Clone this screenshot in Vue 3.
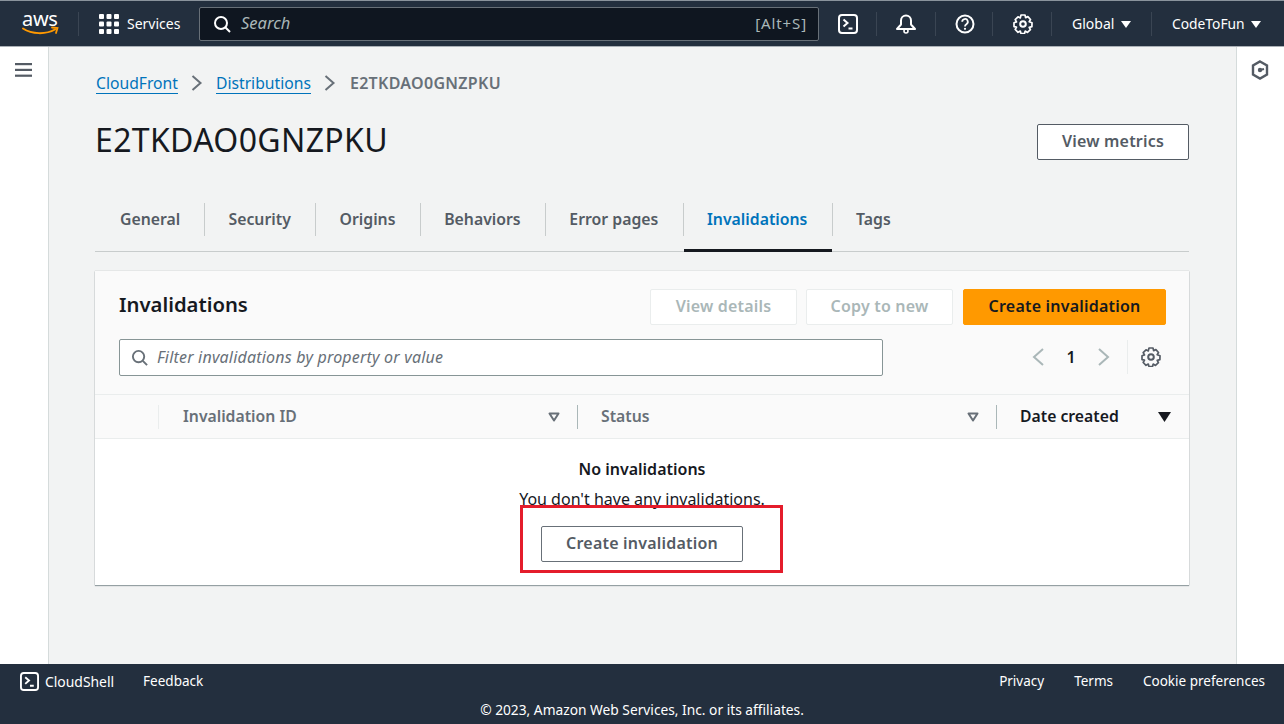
<script setup>
const tabs = ['General', 'Security', 'Origins', 'Behaviors', 'Error pages', 'Invalidations', 'Tags']
</script>

<template>
  <div class="page">
    <header class="top">
      <svg class="aws" viewBox="0 0 37 26" width="37" height="26">
        <text x="0" y="15" class="aws-t">aws</text>
        <path d="M1 17.500c9 6 23 6 32 1" fill="none" stroke="#f90" stroke-width="2" stroke-linecap="round"/>
        <path d="M30 16.500l5.500 0.500-1.500 5" fill="none" stroke="#f90" stroke-width="1.800" stroke-linecap="round"/>
      </svg>
      <span class="divider d1"></span>
      <svg class="grid-ic" width="20" height="20" viewBox="0 0 20 20" fill="#fff">
        <rect x="0" y="0" width="5" height="5" rx="1"/><rect x="7.500" y="0" width="5" height="5" rx="1"/><rect x="15" y="0" width="5" height="5" rx="1"/>
        <rect x="0" y="7.500" width="5" height="5" rx="1"/><rect x="7.500" y="7.500" width="5" height="5" rx="1"/><rect x="15" y="7.500" width="5" height="5" rx="1"/>
        <rect x="0" y="15" width="5" height="5" rx="1"/><rect x="7.500" y="15" width="5" height="5" rx="1"/><rect x="15" y="15" width="5" height="5" rx="1"/>
      </svg>
      <span class="services">Services</span>
      <div class="search">
        <svg width="18" height="18" viewBox="0 0 18 18" fill="none" stroke="#fff" stroke-width="2"><circle cx="8" cy="8" r="6"/><path d="M12.500 12.500L17 17"/></svg>
        <span class="search-ph">Search</span>
        <span class="search-key">[Alt+S]</span>
      </div>
      <div class="ic-cell c1">
        <svg width="20" height="20" viewBox="0 0 20 20" fill="none" stroke="#fff" stroke-width="2"><rect x="1" y="1" width="18" height="18" rx="3"/><path d="M5.500 5.500L9.500 9l-4 3.500M10.500 14.500h4"/></svg>
      </div>
      <div class="ic-cell c2">
        <svg width="20" height="20" viewBox="0 0 20 20" fill="none" stroke="#fff" stroke-width="2" stroke-linejoin="round"><path d="M1 15l4-4.500V6.500a5 5 0 0 1 10 0v4l4 4.500z"/><circle cx="10" cy="17" r="2" stroke-width="1.600"/></svg>
      </div>
      <div class="ic-cell c3">
        <svg width="20" height="20" viewBox="0 0 20 20" fill="none" stroke="#fff" stroke-width="2"><circle cx="10" cy="10" r="8.500"/><path d="M7.200 7.800a2.800 2.800 0 1 1 4.200 2.400c-1 .6-1.400 1-1.400 2.200" stroke-width="1.800"/><circle cx="10" cy="14.800" r="1.100" fill="#fff" stroke="none"/></svg>
      </div>
      <div class="ic-cell c4">
        <svg width="20" height="20" viewBox="0 0 20 20" fill="none" stroke="#fff" stroke-width="2" stroke-linejoin="round"><path d="M8 1h4l.6 2.600 2.300-1 2.600 2.900-1.300 2.200 2.800 1-.1 4-2.700.6 1.200 2.400-2.900 2.700-2.300-1.300-.7 2.500H8l-.7-2.600-2.300 1.300-2.800-2.800 1.300-2.300-2.500-.6V8.700l2.500-.8-1.300-2.300L5 2.800l2.300 1.100z" stroke-width="1.700"/><circle cx="10" cy="10" r="2.800"/></svg>
      </div>
      <div class="menu m1">Global<i class="caret"></i></div>
      <div class="menu m2">CodeToFun<i class="caret"></i></div>
    </header>

    <div class="body">
      <aside class="side left">
        <svg width="17" height="14" viewBox="0 0 17 14" fill="#545b64"><rect width="17" height="2.200" /><rect y="5.800" width="17" height="2.200"/><rect y="11.600" width="17" height="2.200"/></svg>
      </aside>
      <main class="main">
        <nav class="crumbs">
          <a>CloudFront</a>
          <svg width="12" height="16" viewBox="0 0 12 16" fill="none" stroke="#687078" stroke-width="2"><path d="M1.500 1l8 7-8 7"/></svg>
          <a>Distributions</a>
          <svg width="12" height="16" viewBox="0 0 12 16" fill="none" stroke="#687078" stroke-width="2"><path d="M1.500 1l8 7-8 7"/></svg>
          <span class="crumb-cur">E2TKDAO0GNZPKU</span>
        </nav>
        <div class="title-row">
          <h1>E2TKDAO0GNZPKU</h1>
          <button class="btn metrics">View metrics</button>
        </div>
        <div class="tabs">
          <div v-for="t in tabs" :key="t" class="tab" :class="{ active: t === 'Invalidations', last: t === 'Tags' }">
            <span class="tab-in"><span class="tab-t">{{ t }}</span></span>
          </div>
        </div>
        <section class="card">
          <div class="card-head">
            <div class="head-row">
              <h2>Invalidations</h2>
              <div class="actions">
                <button class="btn disabled details">View details</button>
                <button class="btn disabled copy">Copy to new</button>
                <button class="btn primary">Create invalidation</button>
              </div>
            </div>
            <div class="filter-row">
              <div class="filter">
                <svg width="17" height="17" viewBox="0 0 18 18" fill="none" stroke="#687078" stroke-width="2"><circle cx="8" cy="8" r="6"/><path d="M12.500 12.500L17 17"/></svg>
                <span>Filter invalidations by property or value</span>
              </div>
              <div class="pager">
                <svg width="12" height="20" viewBox="0 0 12 20" fill="none" stroke="#aab7b8" stroke-width="2"><path d="M11 2L2 10l9 8"/></svg>
                <span class="pg-num">1</span>
                <svg width="12" height="20" viewBox="0 0 12 20" fill="none" stroke="#aab7b8" stroke-width="2"><path d="M1 2l9 8-9 8"/></svg>
                <span class="pg-sep"></span>
                <svg class="pg-gear" width="20" height="20" viewBox="0 0 20 20" fill="none" stroke="#545b64" stroke-width="1.700" stroke-linejoin="round"><path d="M8 1h4l.6 2.600 2.300-1 2.600 2.900-1.300 2.200 2.800 1-.1 4-2.700.6 1.200 2.400-2.900 2.700-2.300-1.300-.7 2.500H8l-.7-2.600-2.300 1.300-2.800-2.800 1.300-2.300-2.500-.6V8.700l2.500-.8-1.300-2.300L5 2.800l2.300 1.100z"/><circle cx="10" cy="10" r="2.800" stroke-width="2"/></svg>
              </div>
            </div>
            <div class="thead">
              <div class="th sel"></div>
              <div class="th id"><span>Invalidation ID</span><svg width="12" height="10" viewBox="0 0 12 10" fill="none" stroke="#687078" stroke-width="2" stroke-linejoin="round"><path d="M1.500 1.500h9L6 8.500z"/></svg></div>
              <div class="th status"><span>Status</span><svg width="12" height="10" viewBox="0 0 12 10" fill="none" stroke="#687078" stroke-width="2" stroke-linejoin="round"><path d="M1.500 1.500h9L6 8.500z"/></svg></div>
              <div class="th date"><span>Date created</span><svg width="13" height="10" viewBox="0 0 13 10" fill="#16191f"><path d="M0 0h13L6.500 10z"/></svg></div>
            </div>
          </div>
          <div class="empty">
            <strong>No invalidations</strong>
            <p>You don't have any invalidations.</p>
            <div class="cta-wrap">
              <button class="btn cta">Create invalidation</button>
              <span class="highlight"></span>
            </div>
          </div>
        </section>
      </main>
      <aside class="side right">
        <svg width="18" height="20" viewBox="0 0 18 20" fill="none" stroke="#545b64" stroke-width="2.400"><path d="M9 1.500l7 4v9l-7 4-7-4v-9z"/><circle cx="9" cy="10" r="2.200" fill="#545b64" stroke="none"/><path d="M9 10l4-1" stroke-width="2"/></svg>
      </aside>
    </div>

    <footer class="foot">
      <div class="foot-row">
        <svg width="19" height="19" viewBox="0 0 20 20" fill="none" stroke="#fff" stroke-width="2"><rect x="1" y="1" width="18" height="18" rx="3"/><path d="M5.500 5.500L9.500 9l-4 3.500M10.500 14.500h4"/></svg>
        <span class="cs">CloudShell</span>
        <span class="fb">Feedback</span>
        <span class="sp"></span>
        <span>Privacy</span>
        <span>Terms</span>
        <span>Cookie preferences</span>
      </div>
      <div class="copy-line">© 2023, Amazon Web Services, Inc. or its affiliates.</div>
    </footer>
  </div>
</template>

<style>
html, body { margin: 0; padding: 0; background: #fff; }
</style>

<style scoped>
.page { width: 1284px; height: 724px; display: flex; flex-direction: column; font-family: "Noto Sans", "Open Sans", sans-serif; font-size: 14px; color: #16191f; overflow: hidden; background: #f2f3f3; }
button { font-family: inherit; }

.top { height: 47px; flex: none; box-sizing: border-box; background: #232f3e; border-top: 1px solid #8a939c; border-bottom: 1px solid #aab0b6; display: flex; align-items: center; position: relative; color: #fff; }
.aws { margin-left: 22px; flex: none; overflow: visible; }
.aws-t { font: 400 20px "Noto Sans", sans-serif; fill: #fff; letter-spacing: -0.3px; }
.divider { width: 1px; height: 24px; background: #3a4553; margin-left: 19px; }
.grid-ic { margin-left: 20px; flex: none; }
.services { margin-left: 8px; font-size: 14px; color: #fff; width: 53px; white-space: nowrap; }
.search { margin-left: 19px; width: 620px; height: 34px; box-sizing: border-box; background: #0f1620; border: 1px solid #687078; border-radius: 2px; display: flex; align-items: center; padding: 0 11px 0 13px; }
.search-ph { margin-left: 10px; font-style: italic; font-size: 16.500px; color: #aab7b8; margin-top: -2px; }
.search-key { margin-left: auto; font-size: 15px; color: #aab7b8; letter-spacing: .9px; margin-top: -2px; }
.ic-cell { display: flex; align-items: center; justify-content: center; height: 24px; flex: none; border-right: 1px solid #3a4553; box-sizing: border-box; }
.c1 { width: 58px; }
.c2 { width: 59px; padding-right: 1px; }
.c3 { width: 57px; padding-left: 2px; }
.c4 { width: 59px; padding-left: 2px; }
.menu { display: flex; align-items: center; font-size: 14px; height: 24px; flex: none; white-space: nowrap; }
.m1 { width: 100px; padding-left: 20px; box-sizing: border-box; border-right: 1px solid #3a4553; }
.m2 { padding-left: 20px; font-size: 13.800px; }
.m2 .caret { margin-left: 6px; }
.caret { width: 0; height: 0; border-left: 5.500px solid transparent; border-right: 5.500px solid transparent; border-top: 7px solid #fff; margin-left: 7px; margin-top: 1px; }

.body { flex: 1; display: flex; min-height: 0; }
.side { width: 48px; flex: none; background: #fff; display: flex; justify-content: center; padding-top: 16px; box-sizing: border-box; }
.side.left { width: 49px; border-right: 1px solid #d5dbdb; padding-right: 1px; }
.side.right { width: 48px; border-left: 1px solid #d5dbdb; padding-top: 13px; padding-right: 2px; }
.main { flex: 1; min-width: 0; padding: 0 47px 0 46px; }

.crumbs { display: flex; align-items: center; height: 24px; margin: 24px 0 0 1px; gap: 13px; font-size: 15.700px; }
.crumbs a { color: #0073bb; border-bottom: 1px solid #0073bb; line-height: 20px; }
.crumb-cur { color: #687078; font-weight: 600; font-size: 16px; letter-spacing: .3px; margin-left: 1px; }

.title-row { display: flex; align-items: center; justify-content: space-between; height: 36px; margin-top: 27px; }
h1 { margin: 0; font-size: 32px; font-weight: 400; color: #16191f; line-height: 36px; letter-spacing: .35px; }

.btn { height: 36px; box-sizing: border-box; border: 1px solid #545b64; border-radius: 2px; background: #fff; color: #545b64; font-weight: 600; font-size: 16px; padding: 0 0 2px; letter-spacing: .2px; }
.metrics { width: 152px; margin-top: 3px; }

.tabs { display: flex; margin-top: 42px; height: 51px; border-bottom: 1px solid #c8cccc; box-sizing: content-box; }
.tab { position: relative; display: flex; align-items: flex-start; padding-top: 3px; box-sizing: border-box; height: 51px; }
.tab-in { padding: 0 24px 0 25px; height: 33px; display: flex; align-items: center; border-right: 1px solid #c8cccc; font-size: 15.800px; font-weight: 600; color: #545b64; white-space: nowrap; }
.tab-t { margin-top: -2px; }
.tab + .tab .tab-in { padding-left: 23.200px; padding-right: 24.500px; }
.tab.last .tab-in { border-right: 0; }
.tab.active .tab-in { color: #0073bb; }
.tab.active::after { content: ""; position: absolute; left: 0; right: 1px; bottom: -1px; height: 3px; background: #16191f; }

.card { margin-top: 19px; height: 314px; display: flex; flex-direction: column; background: #fff; box-shadow: 0 1px 1px rgba(0,28,36,.35), 0 0 1px rgba(0,28,36,.3); }
.card-head { background: #fafafa; border-bottom: 1px solid #eaeded; height: 168px; box-sizing: border-box; flex: none; }
.head-row { display: flex; justify-content: space-between; align-items: center; padding: 18px 23px 0 24px; height: 36px; }
h2 { margin: -7px 0 0; font-size: 20.300px; font-weight: 600; color: #16191f; }
.actions { display: flex; }
.disabled { background: #fff; border-color: #eaeded; color: #aab7b8; }
.details { width: 147px; margin-right: 9px; }
.copy { width: 147px; margin-right: 10px; }
.primary { width: 203px; background: #ff9900; border-color: #ff9900; color: #16191f; }

.filter-row { display: flex; align-items: center; height: 38px; margin-top: 13px; padding-left: 24px; }
.filter { width: 764px; height: 37px; box-sizing: border-box; background: #fff; border: 1px solid #879596; border-radius: 2px; display: flex; align-items: center; padding-left: 11px; gap: 9px; color: #687078; font-style: italic; font-size: 16px; letter-spacing: .2px; }
.pager { display: flex; align-items: center; margin-left: 149px; position: relative; height: 34px; }
.pg-num { width: 54px; text-align: center; font-weight: 600; font-size: 16px; }
.pg-sep { width: 1px; height: 34px; background: #eaeded; margin-left: 17px; }
.pg-gear { margin-left: 13px; }

.thead { display: flex; height: 44px; margin-top: 18px; border-top: 1px solid #eaeded; box-sizing: border-box; align-items: center; font-size: 15.750px; font-weight: 600; color: #687078; }
.th { display: flex; align-items: center; justify-content: space-between; height: 24px; box-sizing: border-box; }
.th span { margin-top: -2px; }
.sel { width: 64px; border-right: 1px solid #eaeded; }
.id { width: 419px; padding: 0 17px 0 24px; border-right: 1px solid #aab7b8; }
.status { width: 419px; padding: 0 17px 0 23px; border-right: 1px solid #aab7b8; }
.date { flex: 1; padding: 0 18px 0 23px; color: #16191f; }

.empty { flex: 1; display: flex; flex-direction: column; align-items: center; padding-top: 19px; background: #fff; }
.empty strong { font-size: 16px; font-weight: 600; line-height: 22px; }
.empty p { margin: 8px 0 0; font-size: 16px; line-height: 22px; color: #16191f; }
.cta-wrap { position: relative; margin-top: 16px; }
.cta { width: 202px; border-color: #687078; display: block; }
.highlight { position: absolute; left: -21px; top: -21px; width: 263px; height: 68px; box-sizing: border-box; border: 3px solid #e41c2b; pointer-events: none; }

.foot { height: 60px; flex: none; background: #232f3e; color: #fff; box-sizing: border-box; font-size: 13.500px; }
.foot-row { display: flex; align-items: center; padding: 4px 19px 0 20px; height: 26px; gap: 30px; }
.cs { margin-left: -24px; font-size: 13.900px; }
.fb { margin-left: -1px; }
.sp { flex: 1; }
.copy-line { text-align: center; margin-top: 7px; font-size: 13.750px; line-height: 18px; }
</style>
